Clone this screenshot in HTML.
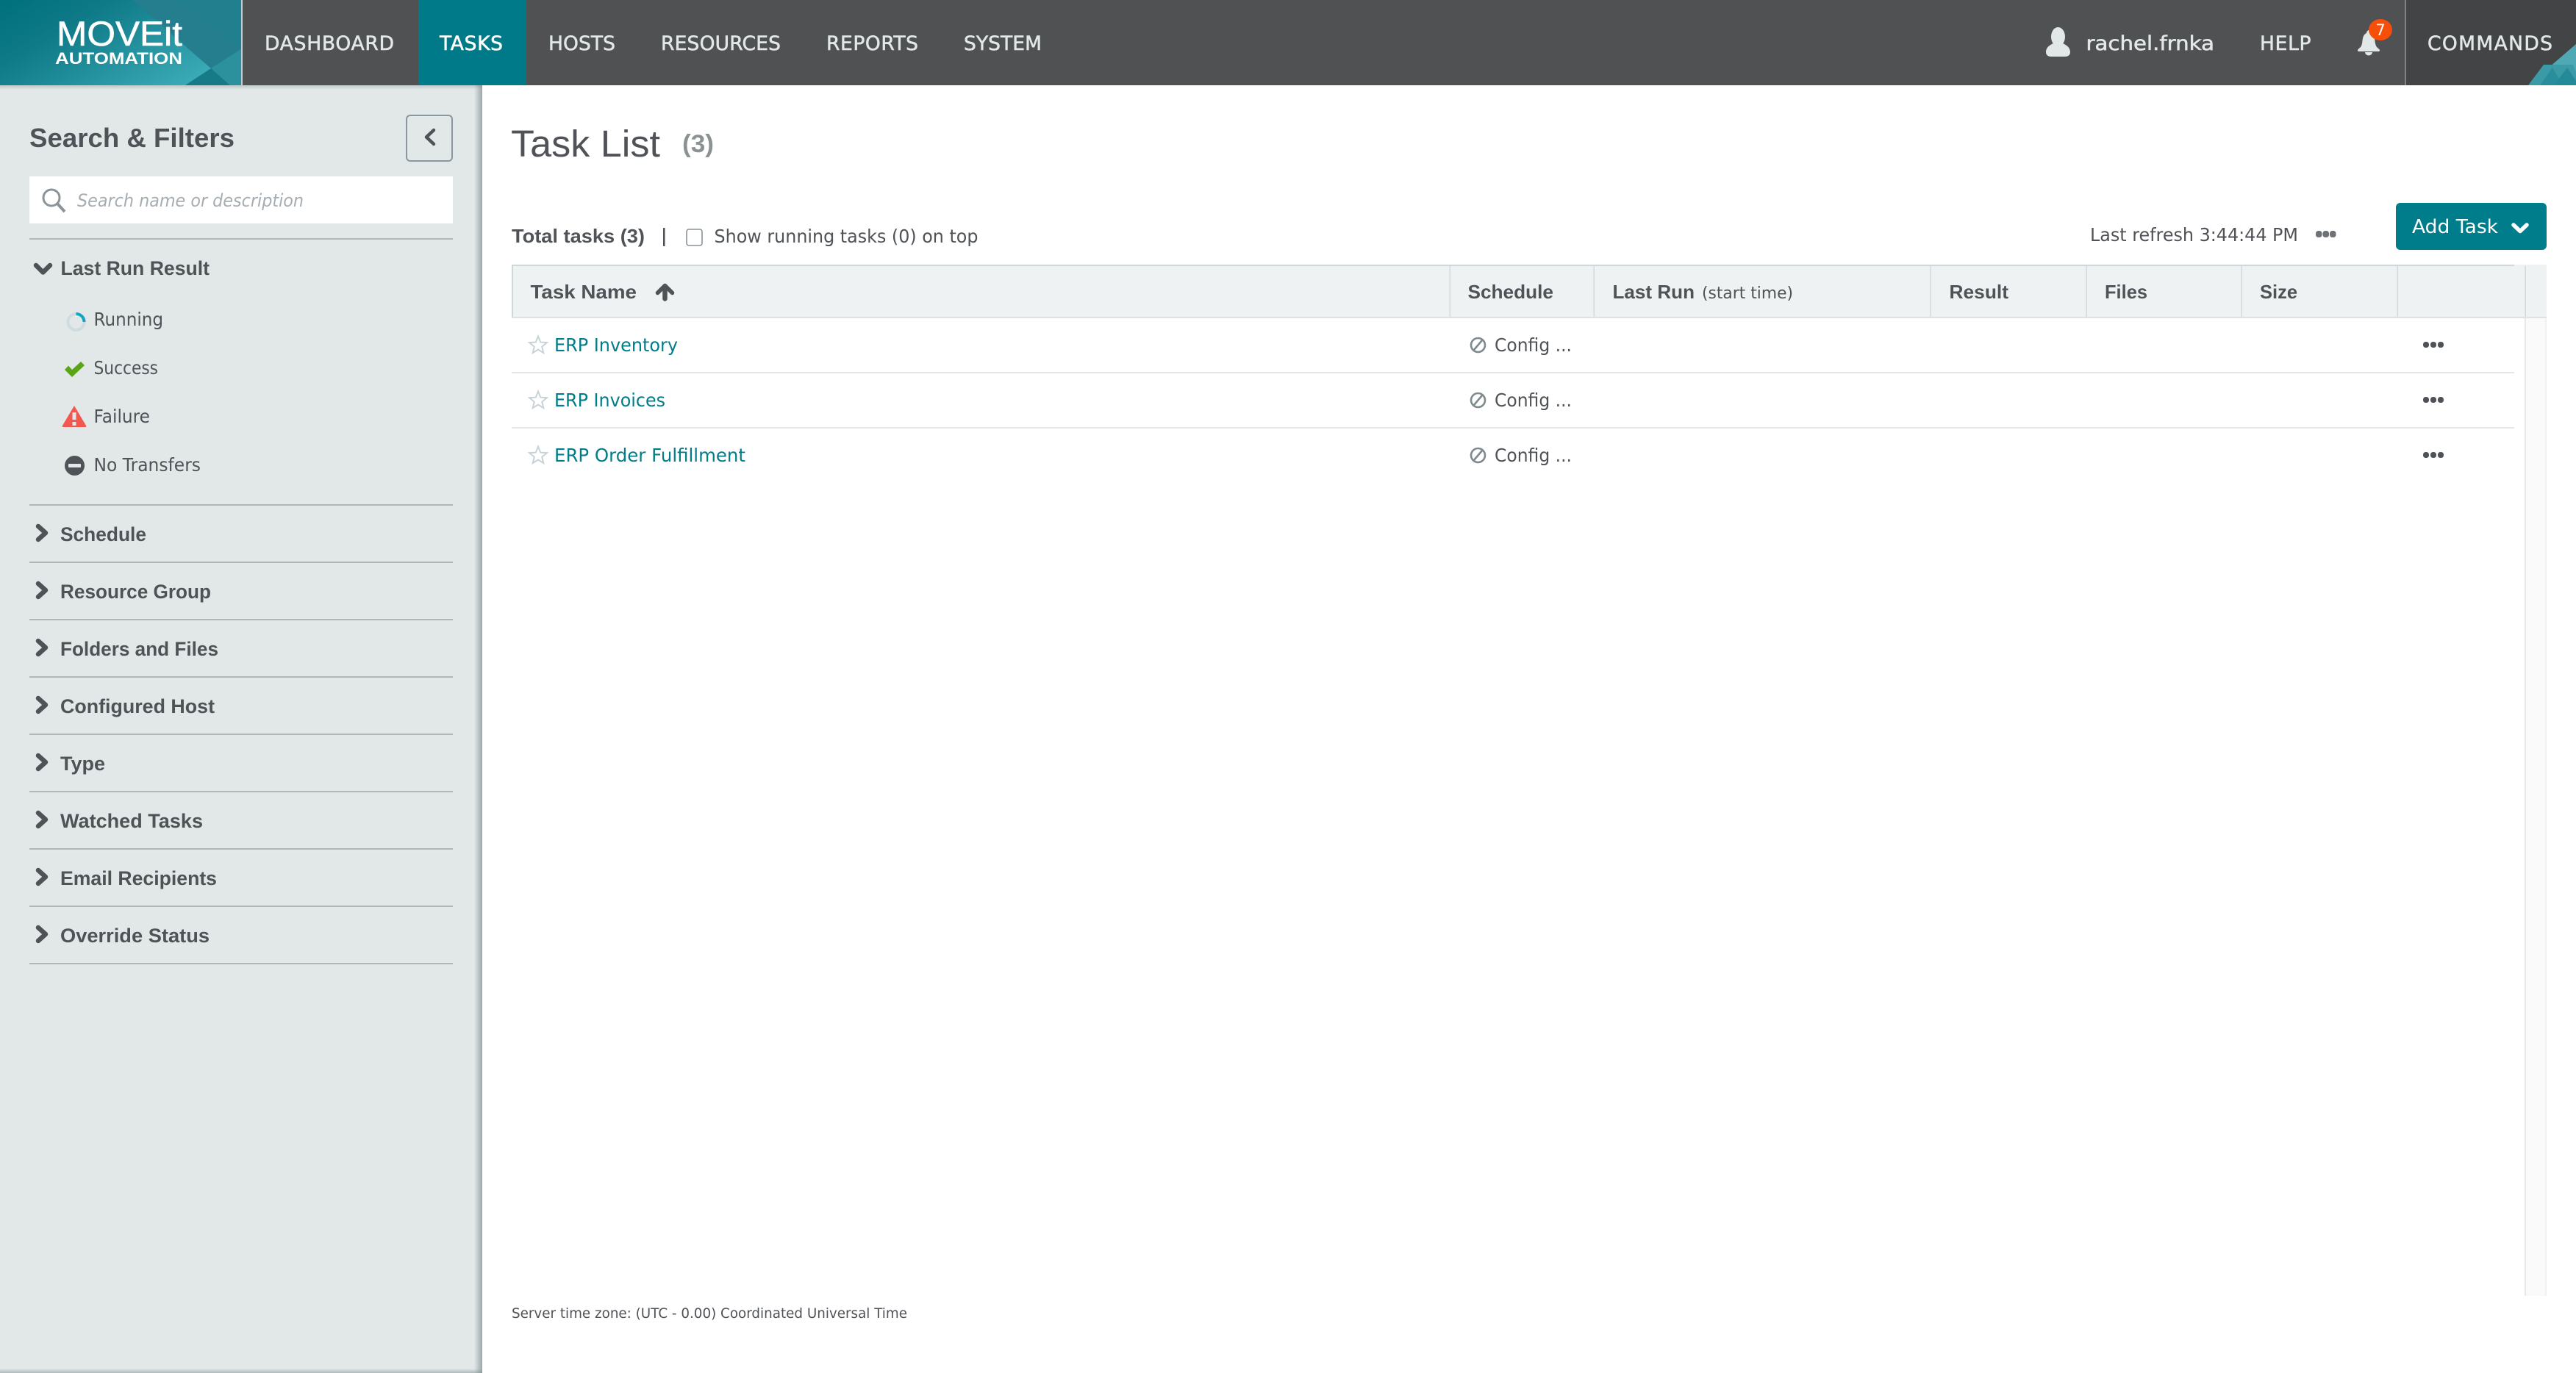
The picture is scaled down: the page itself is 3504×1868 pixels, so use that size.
<!DOCTYPE html>
<html lang="en">
<head>
<meta charset="utf-8">
<title>Task List</title>
<style>
html,body{margin:0;padding:0;background:#fff;width:3504px;height:1868px;overflow:hidden}
svg{display:block}
text{white-space:pre}
.r{font-family:"DejaVu Sans","Liberation Sans",sans-serif;font-weight:400;fill:#4f5256}
.b{font-family:"Liberation Sans","DejaVu Sans",sans-serif;font-weight:700;fill:#4f5256}
.h{font-family:"Liberation Sans",sans-serif;font-weight:400;fill:#4f5256}
.nav{font-family:"DejaVu Sans","Liberation Sans",sans-serif;font-size:26.5px;fill:#e2e8e8;stroke:#e2e8e8;stroke-width:.55px}
.sec{font-size:27px}
.it{font-size:25px}
.th{font-size:26px}
.td{font-size:25px}
.lnk{fill:#007d8a}
</style>
</head>
<body>
<svg xmlns="http://www.w3.org/2000/svg" width="3504" height="1868" viewBox="0 0 3504 1868">
<defs>
<linearGradient id="lg" x1="0" y1="0" x2="1" y2="0.6">
<stop offset="0" stop-color="#00707d"/><stop offset="0.35" stop-color="#0f7a88"/><stop offset="1" stop-color="#3aaab6"/>
</linearGradient>
<linearGradient id="sr" x1="0" y1="0" x2="1" y2="0">
<stop offset="0" stop-color="#7d8a8e" stop-opacity="0"/><stop offset="1" stop-color="#7d8a8e" stop-opacity=".7"/>
</linearGradient>
<linearGradient id="sb" x1="0" y1="0" x2="0" y2="1">
<stop offset="0" stop-color="#7d8a8e" stop-opacity="0"/><stop offset="1" stop-color="#7d8a8e" stop-opacity=".5"/>
</linearGradient>
<linearGradient id="st" x1="0" y1="0" x2="0" y2="1">
<stop offset="0" stop-color="#7d8a8e" stop-opacity=".35"/><stop offset="1" stop-color="#7d8a8e" stop-opacity="0"/>
</linearGradient>
<g id="star"><polygon points="732,457.5 735.2,465.6 743.9,466.1 737.2,471.7 739.3,480.1 732,475.5 724.7,480.1 726.8,471.7 720.1,466.1 728.8,465.6" fill="none" stroke="#c8d3d8" stroke-width="2"/></g>
<g id="no"><circle cx="2010.5" cy="469.5" r="9.5" fill="none" stroke="#7f8a8e" stroke-width="2.6"/><line x1="2005" y1="476" x2="2016" y2="463" stroke="#7f8a8e" stroke-width="2.6"/></g>
<g id="dots" fill="#4f5256"><rect x="3296" y="465" width="8" height="8" rx="3.5"/><rect x="3306" y="465" width="8" height="8" rx="3.5"/><rect x="3316" y="465" width="8" height="8" rx="3.5"/></g>
<path id="chev" d="M52 716 L62 725 L52 734" fill="none" stroke="#4f5256" stroke-width="6.5" stroke-linejoin="round" stroke-linecap="round"/>
</defs>

<!-- page -->
<rect width="3504" height="1868" fill="#fff"/>

<!-- header -->
<rect width="3504" height="116" fill="#505153"/>
<rect x="0" y="0" width="328" height="116" fill="url(#lg)"/>
<polygon points="180,0 328,0 328,67 287,93" fill="#217f8e"/>
<polygon points="180,0 240,0 328,67 287,93" fill="#2a7e8f" opacity=".35"/>
<polygon points="287,93 328,67 328,116 313,116" fill="#2c919c"/>
<polygon points="287,93 252,116 313,116" fill="#177a87"/>
<rect x="328" y="0" width="2" height="116" fill="#b9cfd4"/>
<text x="77" y="62" font-family="Liberation Sans,sans-serif" font-size="47" font-weight="400" fill="#fff" stroke="#fff" stroke-width=".6" textLength="171" lengthAdjust="spacingAndGlyphs">MOVEit</text>
<text x="75" y="87" font-family="Liberation Sans,sans-serif" font-size="22.5" font-weight="700" fill="#fff" textLength="173" lengthAdjust="spacingAndGlyphs">AUTOMATION</text>

<rect x="569" y="0" width="147" height="116" fill="#007a88"/>
<text class="nav" x="360" y="68" textLength="176" lengthAdjust="spacing">DASHBOARD</text>
<text class="nav" x="598" y="68" textLength="86" lengthAdjust="spacing" style="fill:#fff;stroke:#fff">TASKS</text>
<text class="nav" x="746" y="68" textLength="91" lengthAdjust="spacing">HOSTS</text>
<text class="nav" x="899" y="68" textLength="163" lengthAdjust="spacing">RESOURCES</text>
<text class="nav" x="1124" y="68" textLength="125" lengthAdjust="spacing">REPORTS</text>
<text class="nav" x="1311" y="68" textLength="106" lengthAdjust="spacing">SYSTEM</text>

<!-- user -->
<ellipse cx="2799.5" cy="50" rx="9.5" ry="13" fill="#e2e8e8"/>
<path d="M2783 71 C2783 64 2789 61 2793 59 C2796 64 2803 64 2806 59 C2810 61 2816 64 2816 71 C2816 75 2813 77 2809 77 L2790 77 C2786 77 2783 75 2783 71Z" fill="#e2e8e8"/>
<text class="nav" x="2837.5" y="68" textLength="174.5" lengthAdjust="spacingAndGlyphs">rachel.frnka</text>
<text class="nav" x="3074" y="68" textLength="69.5" lengthAdjust="spacing">HELP</text>
<!-- bell -->
<path d="M3222 41 c-1 0-3 2-3 4 c-6 3-5 10-6 14 c-1 6-4 6-6 9 c0 1 0 2 2 2 h26 c2 0 2-1 2-2 c-2-3-5-3-6-9 c-1-4 0-11-6-14 c0-2-2-4-3-4z" fill="#e2e8e8"/>
<path d="M3217 71 a5 4.5 0 0 0 10 0z" fill="#e2e8e8"/>
<ellipse cx="3238" cy="40.5" rx="16" ry="14.5" fill="#f74f0a"/>
<text x="3238" y="48" text-anchor="middle" font-family="DejaVu Sans,sans-serif" font-size="21" fill="#fff">7</text>
<!-- commands -->
<rect x="3271" y="0" width="233" height="116" fill="#434446"/>
<rect x="3271" y="0" width="2" height="116" fill="#808284"/>
<text class="nav" x="3302" y="68" textLength="170" lengthAdjust="spacing">COMMANDS</text>
<polygon points="3439,116 3504,60 3504,116" fill="#4fa9b5"/>
<polygon points="3439,116 3460,88 3500,88 3504,98 3504,116" fill="#3a9aa6"/>
<polygon points="3455,116 3472,92 3486,116" fill="#2a8d9b"/>
<polygon points="3474,116 3492,92 3504,110 3504,116" fill="#248a98"/>

<!-- sidebar -->
<rect x="0" y="116" width="656" height="1752" fill="#e2e8e8"/>
<rect x="0" y="116" width="656" height="6" fill="url(#st)"/>
<rect x="0" y="1862" width="656" height="6" fill="url(#sb)"/>
<rect x="645" y="116" width="11" height="1752" fill="url(#sr)"/>

<text class="b" x="40" y="200" font-size="36" textLength="279" lengthAdjust="spacingAndGlyphs">Search &amp; Filters</text>
<rect x="553" y="157" width="62" height="62" rx="5" fill="none" stroke="#8a97a0" stroke-width="2"/>
<path d="M590 177 L580 186.5 L590 196" fill="none" stroke="#4f5256" stroke-width="4.5" stroke-linejoin="round" stroke-linecap="round"/>

<rect x="40" y="240" width="576" height="64" fill="#fff"/>
<circle cx="70" cy="269" r="11" fill="none" stroke="#8a9499" stroke-width="3"/>
<line x1="78" y1="277" x2="88" y2="288" stroke="#8a9499" stroke-width="4"/>
<text class="r" x="105" y="281" font-size="24" font-style="italic" style="fill:#a5adb2" textLength="308" lengthAdjust="spacingAndGlyphs">Search name or description</text>
<rect x="40" y="324" width="576" height="2" fill="#aeb7bc"/>

<path d="M49 361 L58.5 370.5 L68 361" fill="none" stroke="#4f5256" stroke-width="6.5" stroke-linejoin="round" stroke-linecap="round"/>
<text class="b sec" x="82.5" y="374" textLength="202.5" lengthAdjust="spacingAndGlyphs">Last Run Result</text>

<circle cx="103.5" cy="438" r="11" fill="none" stroke="#cfdbde" stroke-width="4"/>
<path d="M103.5 427 A11 11 0 0 1 114.5 438" fill="none" stroke="#12a5c6" stroke-width="4"/>
<text class="r it" x="127.5" y="443" textLength="94.5" lengthAdjust="spacingAndGlyphs">Running</text>

<path d="M88 503 L93 497.5 L98 503 L110 492 L115 497 L98 513 Z" fill="#5aa516"/>
<text class="r it" x="127.5" y="509" textLength="87.5" lengthAdjust="spacingAndGlyphs">Success</text>

<path d="M101 552 L117 579 Q118 581 116 581 H86 Q84 581 85 579 Z" fill="#f4574f"/>
<rect x="98.5" y="561" width="5" height="10" fill="#e2e8e8"/>
<rect x="98.5" y="574" width="5" height="5" fill="#e2e8e8"/>
<text class="r it" x="127.5" y="575" textLength="76.5" lengthAdjust="spacingAndGlyphs">Failure</text>

<circle cx="101.5" cy="633.5" r="13.5" fill="#4f5256"/>
<rect x="93" y="631" width="17" height="5" rx="1" fill="#e2e8e8"/>
<text class="r it" x="127.5" y="641" textLength="145.5" lengthAdjust="spacingAndGlyphs">No Transfers</text>

<g fill="#aeb7bc">
<rect x="40" y="686" width="576" height="2"/>
<rect x="40" y="764" width="576" height="2"/>
<rect x="40" y="842" width="576" height="2"/>
<rect x="40" y="920" width="576" height="2"/>
<rect x="40" y="998" width="576" height="2"/>
<rect x="40" y="1076" width="576" height="2"/>
<rect x="40" y="1154" width="576" height="2"/>
<rect x="40" y="1232" width="576" height="2"/>
<rect x="40" y="1310" width="576" height="2"/>
</g>

<use href="#chev"/>
<use href="#chev" y="78"/>
<use href="#chev" y="156"/>
<use href="#chev" y="234"/>
<use href="#chev" y="312"/>
<use href="#chev" y="390"/>
<use href="#chev" y="468"/>
<use href="#chev" y="546"/>
<text class="b sec" x="82" y="736" textLength="117" lengthAdjust="spacingAndGlyphs">Schedule</text>
<text class="b sec" x="82" y="814" textLength="205" lengthAdjust="spacingAndGlyphs">Resource Group</text>
<text class="b sec" x="82" y="892" textLength="215" lengthAdjust="spacingAndGlyphs">Folders and Files</text>
<text class="b sec" x="82" y="970" textLength="210" lengthAdjust="spacingAndGlyphs">Configured Host</text>
<text class="b sec" x="82" y="1048" textLength="61" lengthAdjust="spacingAndGlyphs">Type</text>
<text class="b sec" x="82" y="1126" textLength="194" lengthAdjust="spacingAndGlyphs">Watched Tasks</text>
<text class="b sec" x="82" y="1204" textLength="213" lengthAdjust="spacingAndGlyphs">Email Recipients</text>
<text class="b sec" x="82" y="1282" textLength="203" lengthAdjust="spacingAndGlyphs">Override Status</text>

<!-- main -->
<text class="h" x="695" y="213" font-size="51" textLength="203" lengthAdjust="spacingAndGlyphs">Task List</text>
<text class="h" x="928" y="207" font-size="34" style="fill:#8b9293;font-weight:700" textLength="43" lengthAdjust="spacingAndGlyphs">(3)</text>

<text class="b th" x="696" y="330" textLength="181" lengthAdjust="spacingAndGlyphs">Total tasks (3)</text>
<rect x="902" y="310" width="2.5" height="25" fill="#4f5256"/>
<rect x="934" y="312" width="21" height="22" rx="3" fill="#fff" stroke="#8a9398" stroke-width="1.6"/>
<text class="r td" x="971.5" y="330" textLength="359" lengthAdjust="spacingAndGlyphs">Show running tasks (0) on top</text>

<text class="r td" x="2843" y="328" textLength="283" lengthAdjust="spacingAndGlyphs">Last refresh 3:44:44 PM</text>
<g fill="#6e7276"><rect x="3150" y="314" width="8.5" height="9" rx="3.5"/><rect x="3159.5" y="314" width="8.5" height="9" rx="3.5"/><rect x="3169" y="314" width="8.5" height="9" rx="3.5"/></g>

<rect x="3259" y="276" width="205" height="64" rx="6" fill="#007d8a"/>
<text class="r" x="3281" y="317" font-size="26" style="fill:#fff" textLength="117" lengthAdjust="spacingAndGlyphs">Add Task</text>
<path d="M3419 306 L3428 314.5 L3437 306" fill="none" stroke="#fff" stroke-width="5.5" stroke-linejoin="round" stroke-linecap="round"/>

<!-- table header -->
<rect x="696" y="360" width="2768" height="73" fill="#eef2f3"/>
<rect x="696" y="360" width="2724" height="2" fill="#cdd8da"/>
<rect x="696" y="360" width="2" height="73" fill="#cdd8da"/>
<rect x="696" y="431" width="2768" height="2" fill="#dde3e5"/>
<g fill="#d0dadc">
<rect x="1971.5" y="362" width="1.5" height="69"/>
<rect x="2167.5" y="362" width="1.5" height="69"/>
<rect x="2625.5" y="362" width="1.5" height="69"/>
<rect x="2837.5" y="362" width="1.5" height="69"/>
<rect x="3048.5" y="362" width="1.5" height="69"/>
<rect x="3260.5" y="362" width="1.5" height="69"/>
<rect x="3434.5" y="362" width="1.5" height="69"/>
</g>
<rect x="3434" y="433" width="30" height="1330" fill="#fafafa"/>
<rect x="3434" y="433" width="2" height="1330" fill="#e8e8e8"/>
<rect x="3462" y="433" width="2" height="1330" fill="#f0f0f0"/>

<text class="b th" x="721.5" y="406" textLength="144.5" lengthAdjust="spacingAndGlyphs">Task Name</text>
<path d="M894.5 398.5 L904.5 388.5 L914.5 398.5" fill="none" stroke="#4f5256" stroke-width="5.5" stroke-linejoin="round" stroke-linecap="round"/>
<line x1="904.5" y1="391" x2="904.5" y2="406.5" stroke="#4f5256" stroke-width="6.5" stroke-linecap="round"/>
<text class="b th" x="1996.5" y="406" textLength="116.5" lengthAdjust="spacingAndGlyphs">Schedule</text>
<text class="b th" x="2193.5" y="406" textLength="111.5" lengthAdjust="spacingAndGlyphs">Last Run</text>
<text class="r" x="2315" y="406" font-size="22" textLength="124" lengthAdjust="spacingAndGlyphs">(start time)</text>
<text class="b th" x="2651.5" y="406" textLength="80.5" lengthAdjust="spacingAndGlyphs">Result</text>
<text class="b th" x="2863" y="406" textLength="58" lengthAdjust="spacingAndGlyphs">Files</text>
<text class="b th" x="3074" y="406" textLength="51" lengthAdjust="spacingAndGlyphs">Size</text>

<!-- rows -->
<rect x="696" y="506" width="2724" height="2" fill="#e2e8e8"/>
<rect x="696" y="581" width="2724" height="2" fill="#e2e8e8"/>

<use href="#star"/>
<use href="#star" y="75"/>
<use href="#star" y="150"/>
<text class="r td lnk" x="754" y="478" textLength="168" lengthAdjust="spacingAndGlyphs">ERP Inventory</text>
<text class="r td lnk" x="754" y="553" textLength="151" lengthAdjust="spacingAndGlyphs">ERP Invoices</text>
<text class="r td lnk" x="754" y="628" textLength="260" lengthAdjust="spacingAndGlyphs">ERP Order Fulfillment</text>

<use href="#no"/>
<use href="#no" y="75"/>
<use href="#no" y="150"/>
<text class="r td" x="2033" y="478" textLength="105" lengthAdjust="spacingAndGlyphs">Config ...</text>
<text class="r td" x="2033" y="553" textLength="105" lengthAdjust="spacingAndGlyphs">Config ...</text>
<text class="r td" x="2033" y="628" textLength="105" lengthAdjust="spacingAndGlyphs">Config ...</text>

<use href="#dots"/>
<use href="#dots" y="75"/>
<use href="#dots" y="150"/>

<text class="r" x="696" y="1793" font-size="19" textLength="538" lengthAdjust="spacingAndGlyphs">Server time zone: (UTC - 0.00) Coordinated Universal Time</text>
</svg>
</body>
</html>
